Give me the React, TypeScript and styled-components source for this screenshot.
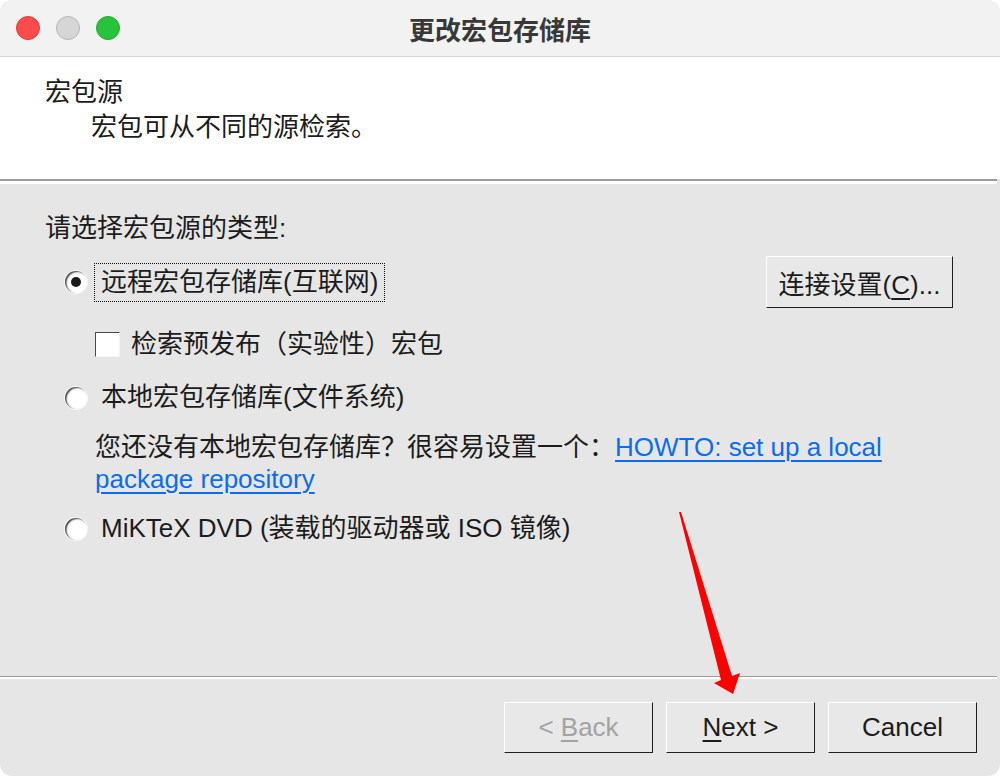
import React from "react";
import styled, { createGlobalStyle } from "styled-components";

const Global = createGlobalStyle`
  html, body { margin: 0; padding: 0; background: #ffffff; }
  body { font-family: "Liberation Sans", "Noto Sans CJK SC", sans-serif; }
`;

const FONT = `"Liberation Sans", "Noto Sans CJK SC", sans-serif`;

const Window = styled.div`
  position: relative;
  width: 1000px;
  height: 776px;
  display: flex;
  flex-direction: column;
  border-radius: 12px;
  overflow: hidden;
  background: #e6e6e6;
  font-family: ${FONT};
  font-size: 26px;
  color: #1c1c1c;
`;

const TitleBar = styled.div`
  height: 56px;
  flex: none;
  display: grid;
  grid-template-columns: 1fr auto 1fr;
  align-items: center;
  background: #f2f2f2;
  border-bottom: 1px solid #d6d6d6;
`;

const Lights = styled.div`
  display: flex;
  gap: 16px;
  padding-left: 16px;
`;

const Light = styled.span<{ $fill: string; $edge: string }>`
  width: 24px;
  height: 24px;
  border-radius: 50%;
  box-sizing: border-box;
  background: ${(p) => p.$fill};
  border: 1px solid ${(p) => p.$edge};
`;

const Title = styled.div`
  font-family: "Noto Sans CJK SC", sans-serif;
  font-weight: 700;
  font-size: 26px;
  color: #383838;
  letter-spacing: 0;
`;

const Header = styled.div`
  flex: none;
  background: #ffffff;
  padding: 18px 45px 34px;
`;

const Heading = styled.div`
  line-height: 35px;
`;

const SubHeading = styled.div`
  line-height: 35px;
  margin-left: 46px;
`;

const Divider = styled.div<{ $thick: number; $light: number }>`
  flex: none;
  margin-right: 3px;
  height: ${(p) => p.$thick}px;
  background: #9b9b9b;
  border-bottom: ${(p) => p.$light}px solid #ffffff;
`;

const Body = styled.div`
  flex: 1;
  display: flex;
  flex-direction: column;
  padding: 28px 47px 0 45px;
`;

const Prompt = styled.div`
  line-height: 32px;
`;

const OptionRow = styled.div<{ $top: number }>`
  display: flex;
  align-items: center;
  justify-content: space-between;
  margin-top: ${(p) => p.$top}px;
`;

const RadioLabel = styled.label`
  display: flex;
  align-items: center;
  margin-left: 20px;
`;

const RadioCircle = styled.span<{ $on?: boolean }>`
  position: relative;
  width: 22px;
  height: 22px;
  border-radius: 50%;
  background: #ffffff;
  box-shadow: inset 1.5px 1px 1.5px rgba(0, 0, 0, 0.75), 0 0 0 1px rgba(255, 255, 255, 0.7);
  &::after {
    content: "";
    display: ${(p) => (p.$on ? "block" : "none")};
    position: absolute;
    left: 6px;
    top: 6px;
    width: 10px;
    height: 10px;
    border-radius: 50%;
    background: #1a1a1a;
  }
`;

const LabelText = styled.span<{ $focus?: boolean }>`
  margin-left: 7px;
  padding: 0 6px;
  line-height: 37px;
  border: 1px dotted ${(p) => (p.$focus ? "#111" : "transparent")};
`;

const PushButton = styled.button<{ $w: number; $h: number; $disabled?: boolean }>`
  width: ${(p) => p.$w}px;
  height: ${(p) => p.$h}px;
  box-sizing: border-box;
  padding: 0;
  font-family: ${FONT};
  font-size: 26px;
  color: ${(p) => (p.$disabled ? "#a3a3a3" : "#1c1c1c")};
  background: #e8e8e8;
  border-style: solid;
  border-width: 1px 1.5px 1.5px 1px;
  border-color: #ffffff #1e1e1e #1e1e1e #ffffff;
  border-radius: 0;
  u { text-underline-offset: 4px; }
`;

const CheckRow = styled.label`
  display: flex;
  align-items: center;
  margin-top: 20px;
  margin-left: 50px;
  line-height: 32px;
`;

const CheckBox = styled.span`
  width: 25px;
  height: 25px;
  box-sizing: border-box;
  background: #ffffff;
  border-style: solid;
  border-width: 1.5px 1px 1px 1.5px;
  border-color: #4a4a4a #f4f4f4 #f4f4f4 #4a4a4a;
`;

const CheckText = styled.span`
  margin-left: 11px;
`;

const Paragraph = styled.p`
  margin: 14px 0 0 50px;
  line-height: 32px;
`;

const Link = styled.a`
  color: #0a6cf2;
  text-decoration: underline;
  text-underline-offset: 4px;
  text-decoration-thickness: 1.5px;
`;

const Footer = styled.div`
  flex: none;
  display: flex;
  justify-content: flex-end;
  gap: 13px;
  padding: 23px 23px 23px 0;
`;

const ArrowLayer = styled.svg`
  position: absolute;
  left: 0;
  top: 0;
  pointer-events: none;
`;

const Radio = ({ on, focus, children }: { on?: boolean; focus?: boolean; children: React.ReactNode }) => (
  <RadioLabel>
    <RadioCircle $on={on} />
    <LabelText $focus={focus}>{children}</LabelText>
  </RadioLabel>
);

export default function App() {
  return (
    <>
      <Global />
      <Window>
        <TitleBar>
          <Lights>
            <Light $fill="#fd4a4a" $edge="#e23a3a" />
            <Light $fill="#d6d6d6" $edge="#b5b5b5" />
            <Light $fill="#29c23b" $edge="#1fa92f" />
          </Lights>
          <Title>更改宏包存储库</Title>
          <div />
        </TitleBar>

        <Header>
          <Heading>宏包源</Heading>
          <SubHeading>宏包可从不同的源检索。</SubHeading>
        </Header>
        <Divider $thick={2} $light={3} />

        <Body>
          <Prompt>请选择宏包源的类型:</Prompt>
          <OptionRow $top={12}>
            <Radio on focus>
              远程宏包存储库(互联网)
            </Radio>
            <PushButton $w={187} $h={52}>
              连接设置(<u>C</u>)...
            </PushButton>
          </OptionRow>
          <CheckRow>
            <CheckBox />
            <CheckText>检索预发布（实验性）宏包</CheckText>
          </CheckRow>
          <OptionRow $top={18}>
            <Radio>本地宏包存储库(文件系统)</Radio>
          </OptionRow>
          <Paragraph>
            您还没有本地宏包存储库？很容易设置一个：
            <Link href="#">HOWTO: set up a local package repository</Link>
          </Paragraph>
          <OptionRow $top={14}>
            <Radio>MiKTeX DVD (装载的驱动器或 ISO 镜像)</Radio>
          </OptionRow>
        </Body>

        <Divider $thick={1} $light={2} />
        <Footer>
          <PushButton $w={149} $h={51} $disabled>
            &lt; <u>B</u>ack
          </PushButton>
          <PushButton $w={149} $h={51}>
            <u>N</u>ext &gt;
          </PushButton>
          <PushButton $w={149} $h={51}>
            Cancel
          </PushButton>
        </Footer>

        <ArrowLayer width="1000" height="776" viewBox="0 0 1000 776">
          <path
            d="M679 512 L681 512 L732 676 L740 673 L733 694 L714 683 L721 680 Z"
            fill="#ff0000"
          />
        </ArrowLayer>
      </Window>
    </>
  );
}
